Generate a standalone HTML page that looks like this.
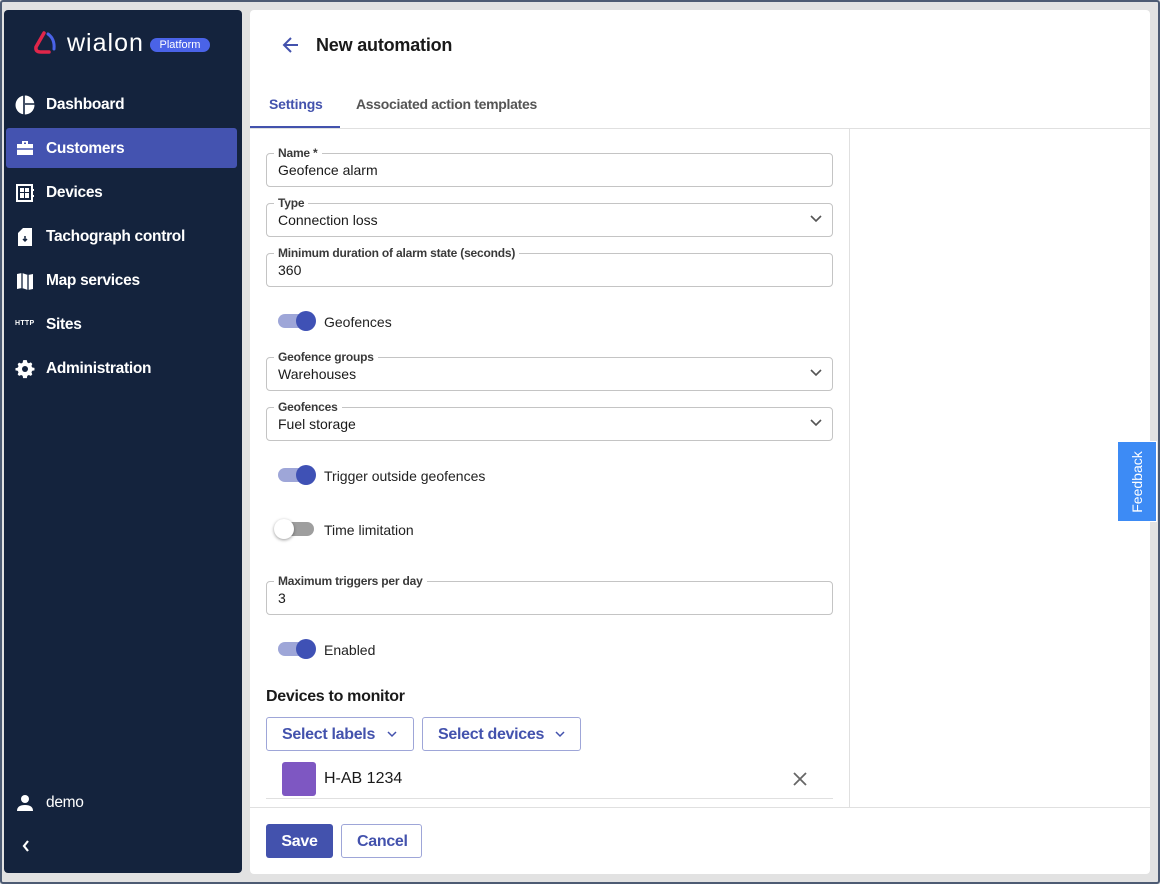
<!DOCTYPE html>
<html><head><meta charset="utf-8"><style>
*{box-sizing:border-box;margin:0;padding:0}
body{width:1160px;height:884px;background:#e2e2e2;font-family:"Liberation Sans",Arial,sans-serif;position:relative;overflow:hidden}
#frame{position:absolute;left:0;top:0;width:1160px;height:884px;border:2px solid #4d5b73;border-radius:3px;pointer-events:none}
.abs{position:absolute}
#side{left:4px;top:10px;width:238px;height:863px;background:#14233d;border-radius:4px}
.nav{position:absolute;left:0;width:238px;height:40px;color:#fff;font-size:15.5px;font-weight:bold;display:flex;align-items:center;padding-left:42px;letter-spacing:-0.3px}
.nav svg{position:absolute;left:11px;top:10px}
#main{left:250px;top:10px;width:900px;height:864px;background:#fff;border-radius:4px}
.fs{position:absolute;left:16px;width:567px;height:34px;border:1px solid #c4c4c4;border-radius:4px}
.fs .lb{position:absolute;left:7px;top:-8px;background:#fff;padding:0 4px;font-size:12px;font-weight:bold;color:#3a3a3a;line-height:14px;letter-spacing:-0.2px}
.fs .v{position:absolute;left:11px;top:8px;font-size:14px;color:#1a1a1a}
.fs svg{position:absolute;right:10px;top:11px}
.tg{position:absolute;left:28px;width:36px;height:14px;border-radius:7px;background:#9ea6d8}
.tg i{position:absolute;right:-2px;top:-3px;width:20px;height:20px;border-radius:50%;background:#3f51b5}
.tg.off{background:#9e9e9e}
.tg.off i{left:-4px;right:auto;background:#fff;box-shadow:0 1px 3px rgba(0,0,0,.4)}
.tl{position:absolute;left:74px;font-size:14px;color:#222}
.btn{position:absolute;height:34px;border:1px solid #9ea6d8;border-radius:3px;color:#4352ad;font-size:16px;font-weight:bold;display:flex;align-items:center;padding-left:15px;padding-top:1px;background:#fff;letter-spacing:-0.3px}
</style></head><body>
<div id="side" class="abs">
  <div class="abs" style="left:29px;top:20px;width:26px;height:26px">
    <svg width="26" height="26" viewBox="0 0 26 26"><path d="M11 3 L3 17 Q2 22 8 22 L16 22" stroke="#e0264a" stroke-width="3.5" fill="none" stroke-linecap="round"/><path d="M15 4 Q22 9 21 19" stroke="#4a63e8" stroke-width="3" fill="none" stroke-linecap="round"/></svg>
  </div>
  <div class="abs" style="left:63px;top:19px;color:#fff;font-size:25px;letter-spacing:1px;line-height:28px">wialon</div>
  <div class="abs" style="left:146px;top:28px;width:60px;height:14px;background:#4a63e8;border-radius:7px;color:#fff;font-size:11px;line-height:14px;text-align:center">Platform</div>
  <div class="nav" style="top:75px"><svg width="20" height="20" viewBox="0 0 20 20"><circle cx="10" cy="10" r="9.5" fill="#fff"/><path d="M9 0v20M10 9h10" stroke="#14233d" stroke-width="1.6"/></svg>Dashboard</div>
  <div class="nav" style="top:118px;left:2px;width:231px;background:#4453b0;border-radius:3px;padding-left:40px;padding-top:2px"><svg width="20" height="20" viewBox="0 0 20 20" style="left:9px"><path d="M7 3h6v3h5v11H2V6h5z" fill="#fff"/><rect x="9" y="4.5" width="2" height="1.5" fill="#4453b0"/><path d="M2 11h16" stroke="#4453b0" stroke-width="1.5"/></svg>Customers</div>
  <div class="nav" style="top:163px"><svg width="20" height="20" viewBox="0 0 20 20"><rect x="2" y="2" width="15" height="16" fill="none" stroke="#fff" stroke-width="2"/><rect x="5" y="5" width="4" height="4" fill="#fff"/><rect x="10" y="5" width="4" height="4" fill="#fff"/><rect x="5" y="10" width="4" height="5" fill="#fff"/><rect x="10" y="10" width="4" height="5" fill="#fff"/><path d="M18 6v2M18 12v2" stroke="#fff" stroke-width="2"/></svg>Devices</div>
  <div class="nav" style="top:207px"><svg width="20" height="20" viewBox="0 0 20 20"><path d="M8 1h9v18H3V6z" fill="#fff"/><path d="M10 9v5M8 12l2 2 2-2" stroke="#14233d" stroke-width="1.5" fill="none"/></svg>Tachograph control</div>
  <div class="nav" style="top:251px"><svg width="20" height="20" viewBox="0 0 20 20"><path d="M2 3l5-1 6 2 5-1v15l-5 1-6-2-5 1z" fill="#fff"/><path d="M7 2v15M13 4v15" stroke="#14233d" stroke-width="1.3"/></svg>Map services</div>
  <div class="nav" style="top:295px"><span style="position:absolute;left:11px;top:15px;font-size:7px;font-weight:bold;letter-spacing:0.3px">HTTP</span>Sites</div>
  <div class="nav" style="top:339px"><svg width="20" height="20" viewBox="0 0 20 20"><path d="M10 1l2 .3.4 2.3 1.6.9 2.2-.9 1.5 1.6-.9 2.2.9 1.6 2.3.4V12l-2.3.4-.9 1.6.9 2.2-1.5 1.6-2.2-.9-1.6.9L12 20.1H8l-.4-2.3-1.6-.9-2.2.9-1.5-1.6.9-2.2L2.3 12.4 0 12V9.6l2.3-.4.9-1.6-.9-2.2 1.5-1.6 2.2.9 1.6-.9L8 1.3z" fill="#fff" transform="scale(.95) translate(.5 0)"/><circle cx="10" cy="10" r="3" fill="#14233d"/></svg>Administration</div>
  <div class="nav" style="top:773px;font-weight:normal"><svg width="20" height="20" viewBox="0 0 20 20"><circle cx="10" cy="6" r="4" fill="#fff"/><path d="M2 18q0-6 8-6t8 6z" fill="#fff"/></svg>demo</div>
  <svg class="abs" style="left:17px;top:829px" width="10" height="14" viewBox="0 0 10 14"><path d="M7 2L3 7l4 5" stroke="#fff" stroke-width="2.2" fill="none"/></svg>
</div>
<div id="main" class="abs">
  <svg class="abs" style="left:31px;top:25px" width="20" height="20" viewBox="0 0 20 20"><path d="M17 10H4M10 3l-7 7 7 7" stroke="#4352ad" stroke-width="2" fill="none"/></svg>
  <div class="abs" style="left:66px;top:25px;font-size:18px;font-weight:bold;color:#1a1a1a;letter-spacing:-0.2px">New automation</div>
  <div class="abs" style="left:19px;top:86px;font-size:14px;font-weight:bold;color:#4352ad;letter-spacing:-0.2px">Settings</div>
  <div class="abs" style="left:106px;top:86px;font-size:14px;font-weight:bold;color:#555;letter-spacing:-0.3px">Associated action templates</div>
  <div class="abs" style="left:0;top:116px;width:90px;height:2px;background:#4352ad"></div>
  <div class="abs" style="left:0;top:118px;width:900px;height:1px;background:#e0e0e0"></div>
  <div class="abs" style="left:599px;top:119px;width:1px;height:678px;background:#e0e0e0"></div>
  <div class="abs" style="left:0;top:797px;width:900px;height:1px;background:#e0e0e0"></div>

  <div class="fs" style="top:143px"><span class="lb">Name *</span><span class="v">Geofence alarm</span></div>
  <div class="fs" style="top:193px"><span class="lb">Type</span><span class="v">Connection loss</span><svg width="12" height="8" viewBox="0 0 12 8"><path d="M1 1l5 5 5-5" stroke="#555" stroke-width="1.6" fill="none"/></svg></div>
  <div class="fs" style="top:243px"><span class="lb">Minimum duration of alarm state (seconds)</span><span class="v">360</span></div>
  <div class="tg" style="top:304px"><i></i></div><div class="tl" style="top:304px">Geofences</div>
  <div class="fs" style="top:347px"><span class="lb">Geofence groups</span><span class="v">Warehouses</span><svg width="12" height="8" viewBox="0 0 12 8"><path d="M1 1l5 5 5-5" stroke="#555" stroke-width="1.6" fill="none"/></svg></div>
  <div class="fs" style="top:397px"><span class="lb">Geofences</span><span class="v">Fuel storage</span><svg width="12" height="8" viewBox="0 0 12 8"><path d="M1 1l5 5 5-5" stroke="#555" stroke-width="1.6" fill="none"/></svg></div>
  <div class="tg" style="top:458px"><i></i></div><div class="tl" style="top:458px">Trigger outside geofences</div>
  <div class="tg off" style="top:512px"><i></i></div><div class="tl" style="top:512px">Time limitation</div>
  <div class="fs" style="top:571px"><span class="lb">Maximum triggers per day</span><span class="v">3</span></div>
  <div class="tg" style="top:632px"><i></i></div><div class="tl" style="top:632px">Enabled</div>
  <div class="abs" style="left:16px;top:678px;font-size:16px;font-weight:bold;color:#1a1a1a;letter-spacing:-0.3px">Devices to monitor</div>
  <div class="btn" style="left:16px;top:707px;width:148px">Select labels<svg class="abs" style="left:120px;top:13px" width="10" height="7" viewBox="0 0 10 7"><path d="M1 1l4 4 4-4" stroke="#4352ad" stroke-width="1.5" fill="none"/></svg></div>
  <div class="btn" style="left:172px;top:707px;width:159px">Select devices<svg class="abs" style="left:132px;top:13px" width="10" height="7" viewBox="0 0 10 7"><path d="M1 1l4 4 4-4" stroke="#4352ad" stroke-width="1.5" fill="none"/></svg></div>
  <div class="abs" style="left:32px;top:752px;width:34px;height:34px;background:#7e57c2;border-radius:3px"></div>
  <div class="abs" style="left:74px;top:760px;font-size:16px;color:#1a1a1a">H-AB 1234</div>
  <svg class="abs" style="left:542px;top:761px" width="16" height="16" viewBox="0 0 16 16"><path d="M2 2l12 12M14 2L2 14" stroke="#666" stroke-width="1.8"/></svg>
  <div class="abs" style="left:16px;top:788px;width:567px;height:1px;background:#e0e0e0"></div>
  <div class="abs" style="left:16px;top:814px;width:67px;height:34px;background:#4352ad;border-radius:3px;color:#fff;font-size:16px;font-weight:bold;text-align:center;line-height:35px;letter-spacing:-0.3px">Save</div>
  <div class="btn" style="left:91px;top:814px;width:81px">Cancel</div>
</div>
<div class="abs" style="left:1117px;top:441px;width:40px;height:81px;background:#3d8bf5;border:1px solid #fff"><div class="abs" style="left:-20px;top:30px;width:78px;height:20px;transform:rotate(-90deg);color:#fff;font-size:14px;text-align:center;line-height:20px">Feedback</div></div>
<div id="frame"></div>
</body></html>
